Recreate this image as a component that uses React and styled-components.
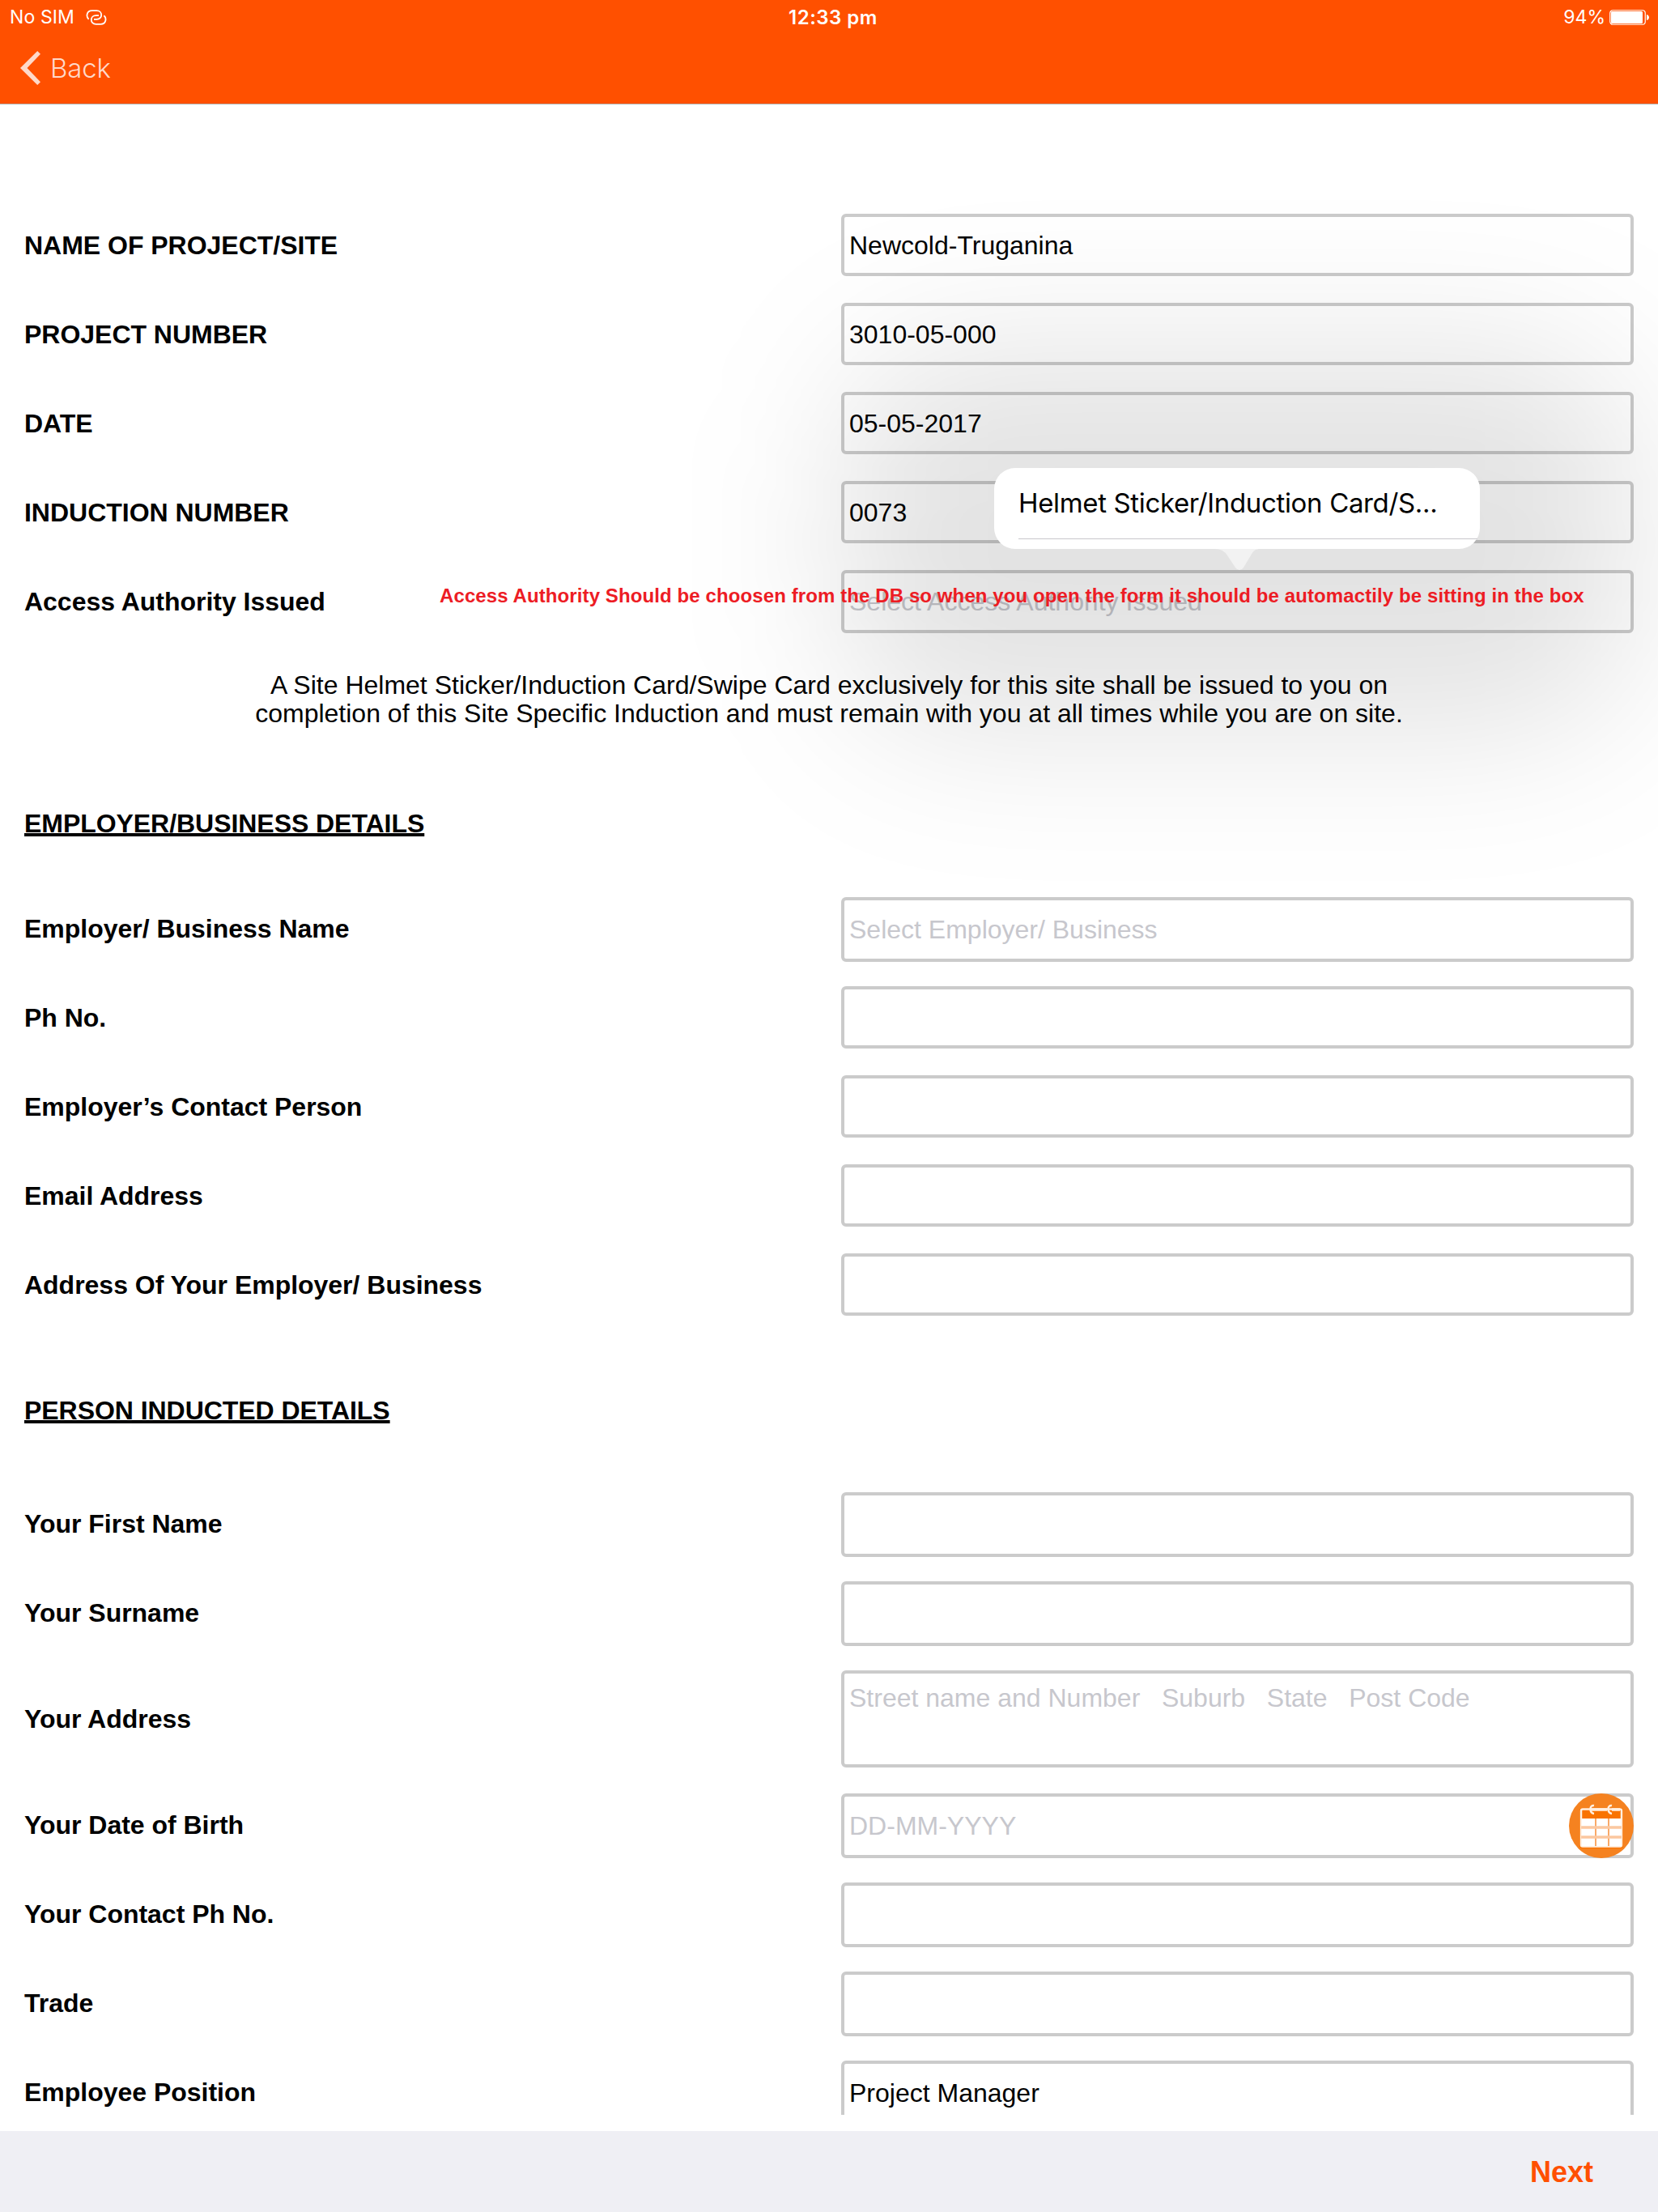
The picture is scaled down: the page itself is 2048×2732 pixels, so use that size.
import React from "react";
import styled, { createGlobalStyle } from "styled-components";

const Global = createGlobalStyle`
  *, *::before, *::after { box-sizing: border-box; }
  body { margin: 0; background: #fff; }
`;

const Screen = styled.div`
  width: 2048px;
  height: 2732px;
  display: flex;
  flex-direction: column;
  overflow: hidden;
  background: #fff;
  color: #000;
  font-family: "Liberation Sans", Arial, sans-serif;
`;

const Header = styled.header`
  height: 129px;
  flex: none;
  display: flex;
  flex-direction: column;
  background: #ff5000;
  border-bottom: 1px solid #b2b2b2;
  color: #fff;
  font-family: Inter, sans-serif;
`;

const StatusBar = styled.div`
  height: 40px;
  display: grid;
  grid-template-columns: 1fr auto 1fr;
  align-items: center;
  padding: 3px 10px 0 12px;
  font-size: 23px;
  line-height: 37px;
`;

const Carrier = styled.div`
  display: flex;
  align-items: center;
  gap: 14px;
  letter-spacing: 0.1px;
`;

const Clock = styled.div`
  font-size: 24px;
  font-weight: 600;
  letter-spacing: 0.5px;
  padding-left: 8px;
`;

const Battery = styled.div`
  display: flex;
  align-items: center;
  justify-content: flex-end;
  gap: 5px;
`;

const BackButton = styled.button`
  display: flex;
  align-items: center;
  align-self: flex-start;
  gap: 10px;
  height: 88px;
  padding: 0 0 0 24px;
  border: 0;
  background: none;
  color: #ffd9c9;
  font: 300 33px/88px Inter, sans-serif;
  letter-spacing: -0.2px;
`;

const Form = styled.main`
  height: 2483px;
  flex: none;
  overflow: hidden;
  padding: 135px 30px 0;
`;

const Section = styled.section`
  display: flex;
  flex-direction: column;
`;

const Row = styled.div`
  position: relative;
  display: grid;
  grid-template-columns: 1009px 979px;
  align-items: center;
  flex: none;
  height: ${(p) => p.$height}px;
  &:not(:last-child) {
    margin-bottom: ${(p) => (p.$height > 110 ? 32 : 110 - p.$height)}px;
  }
`;

const Label = styled.label`
  padding-bottom: ${(p) => (p.$raised ? 2 : 0)}px;
  font-size: 32px;
  font-weight: 700;
  line-height: 36px;
  letter-spacing: -0.02px;
`;

const Field = styled.div`
  position: relative;
  height: 100%;
  display: flex;
  align-items: ${(p) => (p.$multiline ? "flex-start" : "center")};
  padding: ${(p) => (p.$multiline ? "12px 6px" : "0 6px")};
  border: 4px solid #cbcbcb;
  border-radius: 6px;
  color: ${(p) => (p.$placeholder ? "#c7c7cd" : "#000")};
  font-size: 32px;
  line-height: 36px;
  white-space: pre;
`;

const Notice = styled.p`
  margin: 47px 0 0;
  text-align: center;
  font-size: 32px;
  line-height: 35px;
`;

const Heading = styled.h2`
  margin: ${(p) => p.$top}px 0 ${(p) => p.$bottom}px;
  font-size: 32px;
  font-weight: 700;
  line-height: 36px;
  letter-spacing: -0.05px;
  text-decoration: underline;
  text-decoration-thickness: 4px;
  text-underline-offset: 1px;
  text-decoration-skip-ink: none;
`;

const Shade = styled.div`
  position: absolute;
  z-index: 1;
  left: 1008px;
  top: -274px;
  width: 979px;
  height: 475px;
  border-radius: 150px;
  background: rgba(0, 0, 0, 0.108);
  filter: blur(95px);
  pointer-events: none;
`;

const Popover = styled.div`
  position: absolute;
  z-index: 2;
  left: 1198px;
  top: -126px;
  width: 600px;
  height: 100px;
  padding-left: 30px;
  border-radius: 26px;
  background: #fff;
  font: 400 33px/87px Inter, sans-serif;
`;

const Option = styled.div`
  height: 88px;
  border-bottom: 1px solid #c8c7cc;
  margin-right: 3px;
  letter-spacing: -0.35px;
  white-space: nowrap;
`;

const Arrow = styled.svg`
  position: absolute;
  left: 269px;
  top: 100px;
`;

const Note = styled.div`
  position: absolute;
  z-index: 3;
  left: 513px;
  top: 18px;
  color: #ed1c24;
  font-size: 24px;
  font-weight: 700;
  line-height: 28px;
  letter-spacing: 0.1px;
  white-space: nowrap;
`;

const CalendarButton = styled.button`
  position: absolute;
  right: -4px;
  top: -4px;
  width: 80px;
  height: 80px;
  padding: 0;
  border: 0;
  background: none;
  svg { display: block; }
`;

const Footer = styled.footer`
  height: 100px;
  margin-top: 20px;
  flex: none;
  display: flex;
  align-items: center;
  justify-content: flex-end;
  padding: 2px 80px 0 0;
  background: #efeff4;
`;

const NextButton = styled.button`
  padding: 0;
  border: 0;
  background: none;
  color: #ff5000;
  font: 700 36px/40px "Liberation Sans", Arial, sans-serif;
`;

const LinkIcon = () => (
  <svg width="26" height="20" viewBox="0 0 26 20" fill="none" stroke="#fff" strokeWidth="1.8" strokeLinecap="butt">
    <path d="M3.6 11.8C.2 9 .6 1.2 7.5 1.2h6c7.600 0 7.600 10.600 0 10.600h-3.500" />
    <path d="M22.400 7.200c3.400 2.800 3 10.600-3.900 10.600h-6c-7.600 0-7.600-10.600 0-10.600H16" />
  </svg>
);

const BatteryIcon = () => (
  <svg width="50" height="20" viewBox="0 0 50 20">
    <rect x=".75" y=".75" width="43.500" height="17.500" rx="3.500" fill="none" stroke="#fff" strokeWidth="1.200" />
    <rect x="2" y="2" width="39" height="15" rx="1.500" fill="#fff" />
    <path d="M46 6c4 1 4 6 0 7z" fill="#fff" />
  </svg>
);

const Chevron = () => (
  <svg width="28" height="44" viewBox="0 0 28 44">
    <path d="M22.200 1 26 4.800 9.500 22 26 39.200 22.200 43 1 22z" fill="#ffd9c9" />
  </svg>
);

const CalendarIcon = () => (
  <svg width="80" height="80" viewBox="0 0 80 80">
    <circle cx="40" cy="40" r="40" fill="#f58220" />
    <rect x="13" y="18" width="54" height="50" rx="3" fill="#f97300" />
    <rect x="15" y="19.500" width="50" height="46" rx="2" fill="none" stroke="#fff0e2" strokeWidth="2.500" />
    <path d="M16 31h48v34H16z" fill="#fff" />
    <path d="M33 31v34M49 31v34" stroke="#f9a968" strokeWidth="2" />
    <path d="M15 42h50M15 54h50" stroke="#fbc7a0" strokeWidth="3.500" />
    <path d="M27 20h20M53 20h10" stroke="#fff0e2" strokeWidth="3.500" />
    <path d="M31 15c-6-1-6 9 0 10M53 15c-6-1-6 9 0 10" fill="none" stroke="#fff0e2" strokeWidth="2.500" />
  </svg>
);

const FormRow = ({ label, value, placeholder, height = 77, multiline, action, children }) => (
  <Row $height={height}>
    <Label $raised={height === 80}>{label}</Label>
    <Field $placeholder={!value} $multiline={multiline}>
      {value || placeholder}
      {action}
    </Field>
    {children}
  </Row>
);

export default function App() {
  return (
    <Screen>
      <Global />
      <Header>
        <StatusBar>
          <Carrier>No SIM <LinkIcon /></Carrier>
          <Clock>12:33 pm</Clock>
          <Battery>94% <BatteryIcon /></Battery>
        </StatusBar>
        <BackButton><Chevron />Back</BackButton>
      </Header>
      <Form>
        <Section>
          <FormRow label="NAME OF PROJECT/SITE" value="Newcold-Truganina" />
          <FormRow label="PROJECT NUMBER" value="3010-05-000" />
          <FormRow label="DATE" value="05-05-2017" />
          <FormRow label="INDUCTION NUMBER" value="0073" />
          <FormRow height={78} label="Access Authority Issued" placeholder="Select Access Authority Issued">
            <Shade />
            <Popover>
              <Option>Helmet Sticker/Induction Card/S...</Option>
              <Arrow width="64" height="27" viewBox="0 0 64 27">
                <path d="M0 0h64c-6 0-9 2-12 8l-9 15q-2 3-5 3-3 0-5-3L23 8Q18 0 8 0z" fill="#f2f2f2" transform="translate(-4 0)" />
              </Arrow>
            </Popover>
            <Note>Access Authority Should be choosen from the DB so when you open the form it should be automactily be sitting in the box</Note>
          </FormRow>
        </Section>
        <Notice>
          A Site Helmet Sticker/Induction Card/Swipe Card exclusively for this site shall be issued to you on<br />
          completion of this Site Specific Induction and must remain with you at all times while you are on site.
        </Notice>
        <Heading $top={100} $bottom={73}>EMPLOYER/BUSINESS DETAILS</Heading>
        <Section>
          <FormRow height={80} label="Employer/ Business Name" placeholder="Select Employer/ Business" />
          <FormRow label="Ph No." />
          <FormRow label="Employer’s Contact Person" />
          <FormRow label="Email Address" />
          <FormRow label="Address Of Your Employer/ Business" />
        </Section>
        <Heading $top={99} $bottom={83}>PERSON INDUCTED DETAILS</Heading>
        <Section>
          <FormRow height={80} label="Your First Name" />
          <FormRow height={80} label="Your Surname" />
          <FormRow height={120} label="Your Address" multiline placeholder="Street name and Number   Suburb   State   Post Code" />
          <FormRow height={80} label="Your Date of Birth" placeholder="DD-MM-YYYY" action={<CalendarButton><CalendarIcon /></CalendarButton>} />
          <FormRow height={80} label="Your Contact Ph No." />
          <FormRow height={80} label="Trade" />
          <FormRow height={80} label="Employee Position" value="Project Manager" />
        </Section>
      </Form>
      <Footer><NextButton>Next</NextButton></Footer>
    </Screen>
  );
}
